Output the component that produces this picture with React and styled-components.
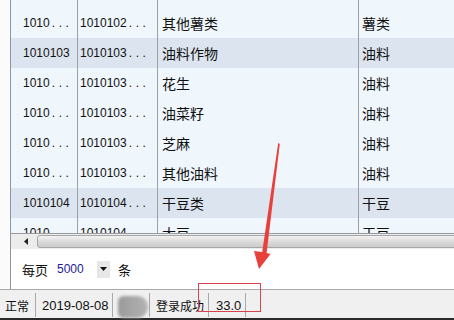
import React from "react";
import styled, { createGlobalStyle } from "styled-components";

const Global = createGlobalStyle`
  html, body { margin: 0; padding: 0; }
  body {
    width: 454px; height: 320px; overflow: hidden; background: #ffffff;
    font-family: "Liberation Sans", "Noto Sans CJK SC", sans-serif;
  }
`;

const Page = styled.div`
  position: relative;
  width: 454px;
  height: 320px;
  display: flex;
  flex-direction: column;
  overflow: hidden;
`;

const Main = styled.div`
  height: 290px;
  display: flex;
  border-bottom: 1px solid #a9a9a9;
  box-sizing: border-box;
  background: #fbfbfb;
`;

const Gutter = styled.div`
  width: 10px;
  flex: none;
`;

const Panel = styled.div`
  flex: 1;
  display: flex;
  flex-direction: column;
  border-left: 1px solid #8f969e;
  background: #ffffff;
  min-width: 0;
`;

const Viewport = styled.div`
  height: 233px;
  overflow: hidden;
  flex: none;
`;

const Rows = styled.div`
  margin-top: -22px;
  display: flex;
  flex-direction: column;
`;

const Row = styled.div`
  display: grid;
  grid-template-columns: 67px 80px 201px 1fr;
  height: 30px;
  background: ${(p) => (p.$hl ? "#dce5ef" : "#eff6fc")};
`;

const Cell = styled.div`
  display: flex;
  align-items: center;
  padding-left: ${(p) => p.$pl}px;
  border-right: ${(p) => (p.$last ? "none" : "1px solid #9aa1a9")};
  font-size: ${(p) => (p.$cjk ? "14px" : "12px")};
  font-family: ${(p) =>
    p.$cjk
      ? '"Noto Sans CJK SC", sans-serif'
      : '"Liberation Sans", sans-serif'};
  color: #111;
  white-space: nowrap;
  overflow: hidden;
`;

const Dots = styled.span`
  letter-spacing: 3.6px;
  margin-left: 2px;
`;

const HScroll = styled.div`
  height: 16px;
  flex: none;
  display: flex;
  align-items: stretch;
  border-top: 1px solid #9a9a9a;
  background: #ececec;
  box-sizing: border-box;
`;

const ScrollBtn = styled.div`
  width: 25px;
  display: flex;
  align-items: center;
  justify-content: center;
  padding-left: 4px;
  box-sizing: border-box;
`;

const Thumb = styled.div`
  flex: 1;
  margin: 1px -4px 1px 1px;
  border: 1px solid #a6a6a6;
  border-radius: 3px 0 0 3px;
  background: linear-gradient(#f3f3f3, #d9d9d9 55%, #cbcbcb);
`;

const Pager = styled.div`
  flex: 1;
  display: flex;
  align-items: center;
  padding-left: 11px;
  font-size: 13px;
  color: #111;
  font-family: "Noto Sans CJK SC", sans-serif;
`;

const PageSize = styled.span`
  font-family: "Liberation Sans", sans-serif;
  font-size: 12px;
  color: #1c1ca0;
  margin-left: 9px;
  width: 40px;
`;

const DropBtn = styled.div`
  width: 13px;
  height: 17px;
  background: #e7e7e7;
  display: flex;
  align-items: center;
  justify-content: center;
`;

const Unit = styled.span`
  margin-left: 8px;
`;

const StatusBar = styled.div`
  height: 30px;
  box-sizing: border-box;
  display: flex;
  align-items: stretch;
  background: #f0f0f0;
  border-bottom: 2px solid #2a2a2a;
  padding: 3px 0 1px;
`;

const StatusItem = styled.div`
  width: ${(p) => p.$w}px;
  flex: none;
  display: flex;
  align-items: center;
  padding-left: ${(p) => p.$pl}px;
  box-sizing: border-box;
  border-right: 1px solid #a8a8a8;
  font-size: ${(p) => (p.$cjk ? "12px" : "13px")};
  font-family: ${(p) =>
    p.$cjk ? '"Noto Sans CJK SC", sans-serif' : '"Liberation Sans", sans-serif'};
  color: #111;
  white-space: nowrap;
`;

const Blob = styled.div`
  width: 30px;
  height: 22px;
  margin-top: 4px;
  border-radius: 6px 12px 12px 6px;
  background: linear-gradient(90deg, #9a9a9a, #b3b3b3);
  filter: blur(1.5px);
`;

const Highlight = styled.div`
  position: absolute;
  left: 198px;
  top: 283px;
  width: 63px;
  height: 29px;
  border: 1px solid #d9434f;
  box-sizing: border-box;
  pointer-events: none;
`;

const Overlay = styled.svg`
  position: absolute;
  left: 0;
  top: 0;
  pointer-events: none;
`;

const rows = [
  [null, null, null, null, false, false],
  ["1010", "1010102", "其他薯类", "薯类", false, false],
  ["1010103", "1010103", "油料作物", "油料", true, true],
  ["1010", "1010103", "花生", "油料", false, false],
  ["1010", "1010103", "油菜籽", "油料", false, false],
  ["1010", "1010103", "芝麻", "油料", false, false],
  ["1010", "1010103", "其他油料", "油料", false, false],
  ["1010104", "1010104", "干豆类", "干豆", true, true],
  ["1010", "1010104", "大豆", "干豆", false, false],
];

export default function App() {
  return (
    <Page>
      <Global />
      <Main>
        <Gutter />
        <Panel>
          <Viewport>
            <Rows>
              {rows.map(([a, b, c, d, full, hl], i) => (
                <Row key={i} $hl={hl}>
                  <Cell $pl={12}>
                    {a}
                    {a && !full && <Dots>...</Dots>}
                  </Cell>
                  <Cell $pl={2}>
                    {b}
                    {b && <Dots>...</Dots>}
                  </Cell>
                  <Cell $pl={4} $cjk>
                    {c}
                  </Cell>
                  <Cell $pl={3} $cjk $last>
                    {d}
                  </Cell>
                </Row>
              ))}
            </Rows>
          </Viewport>
          <HScroll>
            <ScrollBtn>
              <svg width="4" height="7" viewBox="0 0 4 7">
                <path d="M4 0 L0 3.5 L4 7 Z" fill="#222" />
              </svg>
            </ScrollBtn>
            <Thumb />
          </HScroll>
          <Pager>
            每页
            <PageSize>5000</PageSize>
            <DropBtn>
              <svg width="7" height="4" viewBox="0 0 7 4">
                <path d="M0 0 L7 0 L3.5 4 Z" fill="#111" />
              </svg>
            </DropBtn>
            <Unit>条</Unit>
          </Pager>
        </Panel>
      </Main>
      <StatusBar>
        <StatusItem $w={36} $pl={5} $cjk>正常</StatusItem>
        <StatusItem $w={77} $pl={6}>2019-08-08</StatusItem>
        <StatusItem $w={37} $pl={5}>
          <Blob />
        </StatusItem>
        <StatusItem $w={59} $pl={6} $cjk>登录成功</StatusItem>
        <StatusItem $w={37} $pl={7}>33.0</StatusItem>
      </StatusBar>
      <Highlight />
      <Overlay width="454" height="320" viewBox="0 0 454 320">
        <polygon
          points="278.2,143 279.8,144 266.6,253 270.5,254 259,269 254,251 262.2,252"
          fill="#e8403c"
        />
      </Overlay>
    </Page>
  );
}
